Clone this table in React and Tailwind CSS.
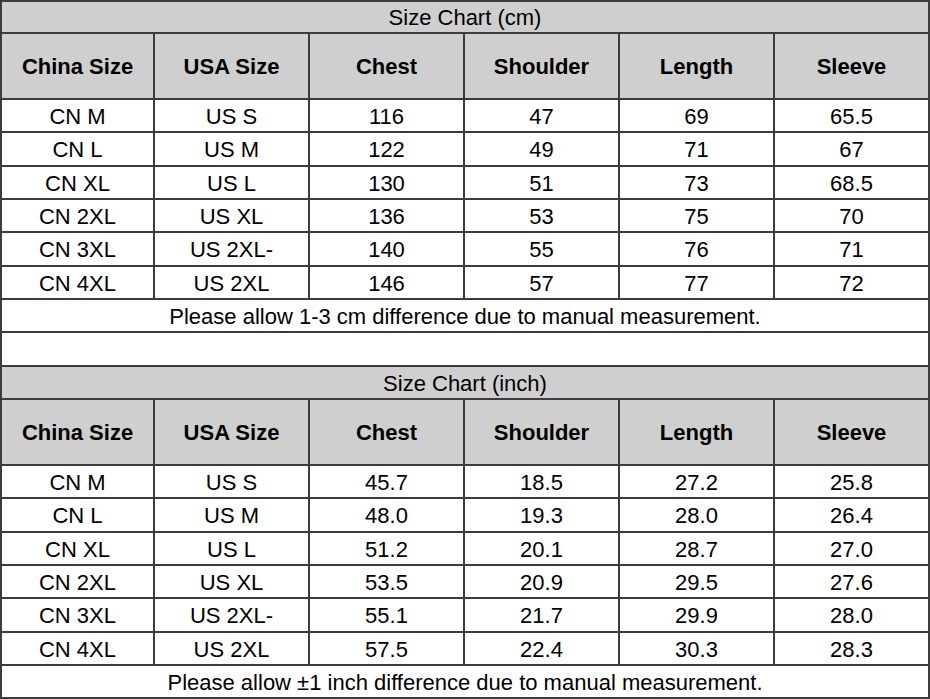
import React from 'react'

const cols = ['China Size', 'USA Size', 'Chest', 'Shoulder', 'Length', 'Sleeve']

const cmRows = [
    ['CN M', 'US S', '116', '47', '69', '65.5'],
    ['CN L', 'US M', '122', '49', '71', '67'],
    ['CN XL', 'US L', '130', '51', '73', '68.5'],
    ['CN 2XL', 'US XL', '136', '53', '75', '70'],
    ['CN 3XL', 'US 2XL-', '140', '55', '76', '71'],
    ['CN 4XL', 'US 2XL', '146', '57', '77', '72'],
]

const inchRows = [
    ['CN M', 'US S', '45.7', '18.5', '27.2', '25.8'],
    ['CN L', 'US M', '48.0', '19.3', '28.0', '26.4'],
    ['CN XL', 'US L', '51.2', '20.1', '28.7', '27.0'],
    ['CN 2XL', 'US XL', '53.5', '20.9', '29.5', '27.6'],
    ['CN 3XL', 'US 2XL-', '55.1', '21.7', '29.9', '28.0'],
    ['CN 4XL', 'US 2XL', '57.5', '22.4', '30.3', '28.3'],
]

const rowHeights = ['h-[33px]', 'h-[34px]', 'h-[33px]', 'h-[33px]', 'h-[34px]', 'h-[33px]']

function Cell({ children, first, className = '' }) {
    return (
        <div
            className={`w-[155px] flex items-center justify-center border-r-2 border-[#3c3c3c] ${first ? 'border-l-2' : ''} ${className}`}
        >
            {children}
        </div>
    )
}

function Chart({ title, rows, note, titleHeight }) {
    return (
        <>
            <div className={`${titleHeight} flex items-center justify-center bg-[#d0cfcf] border-x-2 border-b-2 border-[#3c3c3c] text-[22px] pt-[2px]`}>
                {title}
            </div>
            <div className="h-[66px] flex border-b-2 border-[#3c3c3c] bg-[#d0cfcf]">
                {cols.map((c, i) => (
                    <Cell key={c} first={i === 0} className="font-bold text-[22px] pt-[1px]">{c}</Cell>
                ))}
            </div>
            {rows.map((r, ri) => (
                <div key={ri} className={`${rowHeights[ri]} flex border-b-2 border-[#3c3c3c]`}>
                    {r.map((v, i) => (
                        <Cell key={i} first={i === 0} className="text-[22px] pt-[2px]">{v}</Cell>
                    ))}
                </div>
            ))}
            <div className="h-[33px] flex items-center justify-center border-x-2 border-b-2 border-[#3c3c3c] text-[22px] pt-[2px]">
                {note}
            </div>
        </>
    )
}

export default function App() {
    return (
        <div className="w-[930px] h-[699px] bg-white text-black border-t-2 border-[#3c3c3c] font-['Liberation_Sans',Arial,sans-serif] leading-none">
            <Chart
                title="Size Chart (cm)"
                rows={cmRows}
                note="Please allow 1-3 cm difference due to manual measurement."
                titleHeight="h-[32px]"
            />
            <div className="h-[34px] border-x-2 border-b-2 border-[#3c3c3c]" />
            <Chart
                title="Size Chart (inch)"
                rows={inchRows}
                note="Please allow ±1 inch difference due to manual measurement."
                titleHeight="h-[33px]"
            />
        </div>
    )
}
